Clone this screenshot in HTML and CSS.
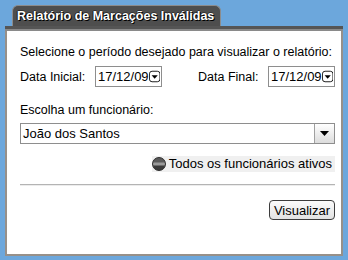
FILE: index.html
```html
<!DOCTYPE html>
<html lang="pt-BR">
<head>
    <meta charset="UTF-8">
    <meta name="viewport" content="width=device-width, initial-scale=1.0">
    <title>Relatório de Marcações Inválidas</title>
    <link rel="stylesheet" href="styles.css">
</head>
<body>
    <div class="window">
        <div class="tab-row">
            <div class="tab">Relatório de Marcações Inválidas</div>
        </div>
        <div class="tab-bar"></div>
        <div class="panel">
            <p class="intro">Selecione o período desejado para visualizar o relatório:</p>
            <div class="dates">
                <div class="date-group">
                    <span class="date-label first">Data Inicial:</span>
                    <div class="date-box">
                        <span>17/12/09</span>
                        <svg class="date-btn" width="13" height="13" viewBox="0 0 13 13">
                            <rect x="0.5" y="0.5" width="12" height="12" rx="3" fill="#fff" stroke="#000"/>
                            <path d="M3 5h7l-3.5 4z" fill="#000"/>
                        </svg>
                    </div>
                </div>
                <div class="date-group">
                    <span class="date-label">Data Final:</span>
                    <div class="date-box">
                        <span>17/12/09</span>
                        <svg class="date-btn" width="13" height="13" viewBox="0 0 13 13">
                            <rect x="0.5" y="0.5" width="12" height="12" rx="3" fill="#fff" stroke="#000"/>
                            <path d="M3 5h7l-3.5 4z" fill="#000"/>
                        </svg>
                    </div>
                </div>
            </div>

            <p class="emp-label">Escolha um funcionário:</p>
            <div class="select">
                <span class="select-value">João dos Santos</span>
                <span class="select-arrow">
                    <svg width="9" height="5" viewBox="0 0 9 5"><path d="M0 0h9l-4.5 5z" fill="#000"/></svg>
                </span>
            </div>

            <div class="radio-row">
                <label class="radio">
                    <span class="radio-dot"></span>
                    Todos os funcionários ativos
                </label>
            </div>

            <div class="divider"></div>

            <div class="actions">
                <button type="button" class="btn">Visualizar</button>
            </div>
        </div>
    </div>
</body>
</html>
```

FILE: styles.css
```css
body {
    margin: 0;
    padding: 0;
    background-color: #6ca7dc;
    font-family: "Liberation Sans", Arial, sans-serif;
    font-size: 12.5px;
    color: #000;
}
.window {
    margin: 5px 5px 0 5px;
    width: 338px;
}
.tab-row {
    display: flex;
    padding-left: 7px;
}
.tab {
    height: 20px;
    line-height: 21px;
    padding: 0 6px 0 4px;
    background-color: #4e4e4e;
    border: 1px solid #8c8c8c;
    border-bottom: none;
    border-radius: 6px 6px 0 0;
    color: #fff;
    font-weight: bold;
    font-size: 12.5px;
    text-shadow: 1px 1px 0 #000, -1px 0 0 #222, 0 -1px 0 #333;
}
.tab-bar {
    height: 3px;
    background-color: #555;
    border-bottom: 2px solid #8a8a8a;
}
.panel {
    background-color: #fff;
    border: 2px solid #979089;
    border-top: none;
    padding: 14px 6px 34px 13px;
}
.intro {
    margin: 0;
    line-height: 15px;
    white-space: nowrap;
}
.dates {
    display: flex;
    justify-content: space-between;
    margin-top: 6px;
}
.date-group {
    display: flex;
    align-items: flex-end;
}
.date-label {
    width: 70px;
    line-height: 15px;
    padding-bottom: 2px;
}
.date-label.first {
    width: 75px;
}
.date-box {
    display: flex;
    align-items: center;
    justify-content: space-between;
    width: 62px;
    height: 19px;
    padding: 0 1px 0 2px;
    border: 1px solid #8e8e8e;
    font-size: 13px;
}
.date-btn {
    display: block;
}
.emp-label {
    margin: 16px 0 0 0;
    line-height: 15px;
}
.select {
    display: flex;
    margin-top: 5px;
    height: 19px;
    border: 1px solid #8e8e8e;
}
.select-value {
    flex: 1;
    line-height: 19px;
    padding-left: 2px;
    font-size: 13px;
}
.select-arrow {
    width: 19px;
    display: flex;
    align-items: center;
    justify-content: center;
    border-left: 1px solid #a0a0a0;
    background: linear-gradient(#ffffff, #dcdcdc);
}
.radio-row {
    display: flex;
    justify-content: flex-end;
    margin-top: 12px;
}
.radio {
    display: flex;
    align-items: center;
    gap: 3px;
    height: 16px;
    padding-right: 3px;
    background-color: #f0f0f0;
    line-height: 16px;
    font-size: 13px;
}
.radio-dot {
    width: 12px;
    height: 12px;
    border-radius: 50%;
    border: 1px solid #2a2a2a;
    background: linear-gradient(#5a5a5a 0%, #5a5a5a 30%, #9a9a9a 45%, #9a9a9a 55%, #3a3a3a 70%, #3a3a3a 100%);
}
.divider {
    margin-top: 12px;
    border-top: 1px solid #b4b4b4;
    border-bottom: 1px solid #ececec;
}
.actions {
    display: flex;
    justify-content: flex-end;
    margin-top: 14px;
}
.btn {
    width: 66px;
    height: 20px;
    padding: 0;
    font-family: "Liberation Sans", Arial, sans-serif;
    font-size: 13px;
    color: #000;
    border: 1px solid #3c3c3c;
    border-radius: 4px;
    background: linear-gradient(#fbfbfb, #e2e2e2);
}
```
